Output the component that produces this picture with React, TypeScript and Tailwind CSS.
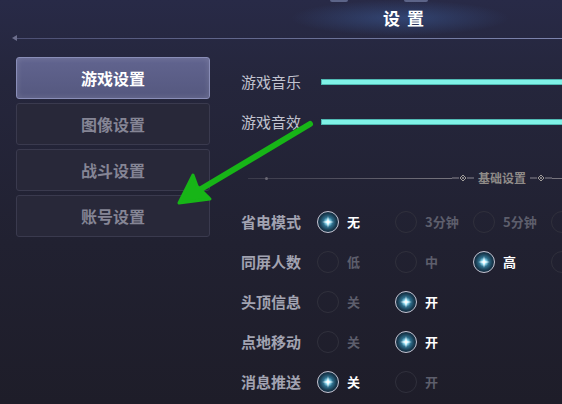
const sliders = [
  { label: '游戏音乐' },
  { label: '游戏音效' },
]

const menu = [
  { label: '游戏设置', active: true },
  { label: '图像设置', active: false },
  { label: '战斗设置', active: false },
  { label: '账号设置', active: false },
]

// the last item of the first two rows runs past the right edge; only its circle shows
const options = [
  { label: '省电模式', items: ['无', '3分钟', '5分钟', ''], selected: 0 },
  { label: '同屏人数', items: ['低', '中', '高', ''], selected: 2 },
  { label: '头顶信息', items: ['关', '开'], selected: 1 },
  { label: '点地移动', items: ['关', '开'], selected: 1 },
  { label: '消息推送', items: ['关', '开'], selected: 0 },
]

function Radio({ on }: { on: boolean }) {
  if (!on) {
    return <span className="w-[22px] h-[22px] shrink-0 rounded-full border border-[#30303c]" />
  }
  return (
    <span className="relative w-[22px] h-[22px] shrink-0 rounded-full border-[1.5px] border-[#c4c4d2] bg-[radial-gradient(circle,#ffffff_0%,#9feaff_14%,#2e6f8c_34%,#18384d_60%,#142434_100%)] flex items-center justify-center">
      <svg width="12" height="12" viewBox="0 0 12 12">
        <path d="M6 0 L6.8 5.2 L12 6 L6.8 6.8 L6 12 L5.2 6.8 L0 6 L5.2 5.2 Z" fill="#ffffff" opacity="0.9" />
      </svg>
    </span>
  )
}

function Ornament() {
  return (
    <svg width="22" height="8" viewBox="0 0 22 8" className="shrink-0">
      <path d="M0 4 H7" stroke="#8a8790" strokeWidth="1" />
      <path d="M11 1 L14 4 L11 7 L8 4 Z" fill="none" stroke="#a09c98" strokeWidth="1" />
      <circle cx="11" cy="4" r="1" fill="#a09c98" />
      <path d="M15 4 H22" stroke="#8a8790" strokeWidth="1" />
    </svg>
  )
}

export default function App() {
  return (
    <div
      className="relative w-[562px] h-[404px] overflow-hidden bg-[linear-gradient(180deg,#282a47_0%,#25263c_20%,#212131_60%,#1e1d29_100%)]"
      style={{ fontFamily: '"Noto Sans CJK SC", "Noto Sans", sans-serif' }}
    >
      {/* header */}
      <div className="relative h-[40px]">
        <div className="absolute left-[290px] top-0 w-[220px] h-[36px] bg-[radial-gradient(ellipse_at_center,rgba(70,120,200,0.35),transparent_70%)]" />
        <div className="absolute left-[330px] -top-[2px] w-[18px] h-[4px] rounded-full bg-[#5c6488]" />
        <div className="absolute left-[404px] -top-[2px] w-[24px] h-[4px] rounded-full bg-[#5c6488]" />
        <div className="relative flex pl-[383px] pt-[7px]">
          <span className="text-[17px] leading-[22px] font-bold text-white tracking-[7px]">设置</span>
        </div>
        <div className="absolute left-[12px] right-0 top-[35px] flex items-center">
          <span className="w-0 h-0 border-y-[3px] border-y-transparent border-r-[5px] border-r-[#6c6e8c]" />
          <div className="flex-1 h-[1px] bg-[linear-gradient(90deg,#4c4f72,#6c7298_60%,#7d84ad)]" />
        </div>
      </div>

      <div className="flex">
        {/* left menu */}
        <div className="w-[225px] shrink-0 pl-[16px] pt-[17px] flex flex-col gap-[4px]">
          {menu.map((m) =>
            m.active ? (
              <div
                key={m.label}
                className="w-[194px] h-[42px] rounded-[3px] border border-[#8a8eb8] bg-[linear-gradient(180deg,#61648f,#55587f)] flex items-center justify-center text-[16px] font-bold text-white shadow-[inset_0_0_6px_rgba(255,255,255,0.15)]"
              >
                {m.label}
              </div>
            ) : (
              <div
                key={m.label}
                className="w-[194px] h-[42px] rounded-[3px] border border-[#3a3a4e] bg-[#282839] flex items-center justify-center text-[16px] font-bold text-[#858595]"
              >
                {m.label}
              </div>
            )
          )}
        </div>

        {/* right content */}
        <div className="flex-1 pl-[16px] pt-[22px]">
          {sliders.map((s) => (
            <div key={s.label} className="h-[40px] flex items-center">
              <span className="w-[80px] shrink-0 text-[15px] text-[#c2c3cf]">{s.label}</span>
              <div className="flex-1 h-[6px] bg-[#80f2e7] border border-[#4fb9b2] -mr-[10px]" />
            </div>
          ))}

          <div className="mt-[30px] mb-[18px] h-[12px] flex items-center -mr-[10px] pl-[7px]">
            <div className="w-[204px] h-[1px] bg-[linear-gradient(90deg,#3a3a4a,#4e4d5c_40%,#77757e)] relative">
              <span className="absolute left-[17px] -top-[1px] w-[3px] h-[3px] rounded-full bg-[#6a6874]" />
            </div>
            <Ornament />
            <span className="px-[4px] text-[12px] font-bold text-[#8f8b88] leading-none">基础设置</span>
            <Ornament />
            <div className="flex-1 h-[1px] bg-[#77757e]" />
          </div>

          {options.map((o) => (
            <div key={o.label} className="h-[40px] flex items-center">
              <span className="w-[76px] shrink-0 text-[15px] font-bold text-[#a2a3b1]">{o.label}</span>
              {o.items.map((it, i) => (
                <div key={i} className="w-[78px] shrink-0 flex items-center gap-[8px]">
                  <Radio on={i === o.selected} />
                  {it && (
                    <span
                      className={
                        i === o.selected
                          ? 'text-[13px] font-bold text-white whitespace-nowrap'
                          : 'text-[13px] font-bold text-[#5d5e6c] whitespace-nowrap'
                      }
                    >
                      {it}
                    </span>
                  )}
                </div>
              ))}
            </div>
          ))}
        </div>
      </div>

      {/* green arrow */}
      <svg className="absolute inset-0 pointer-events-none" width="562" height="404" viewBox="0 0 562 404">
        <path d="M310 124 L196 192" stroke="#17b517" strokeWidth="6" strokeLinecap="round" />
        <path d="M179 203 L193 175 L197 186 L210 199 Z" fill="#17b517" stroke="#17b517" strokeWidth="3" strokeLinejoin="round" />
      </svg>
    </div>
  )
}
